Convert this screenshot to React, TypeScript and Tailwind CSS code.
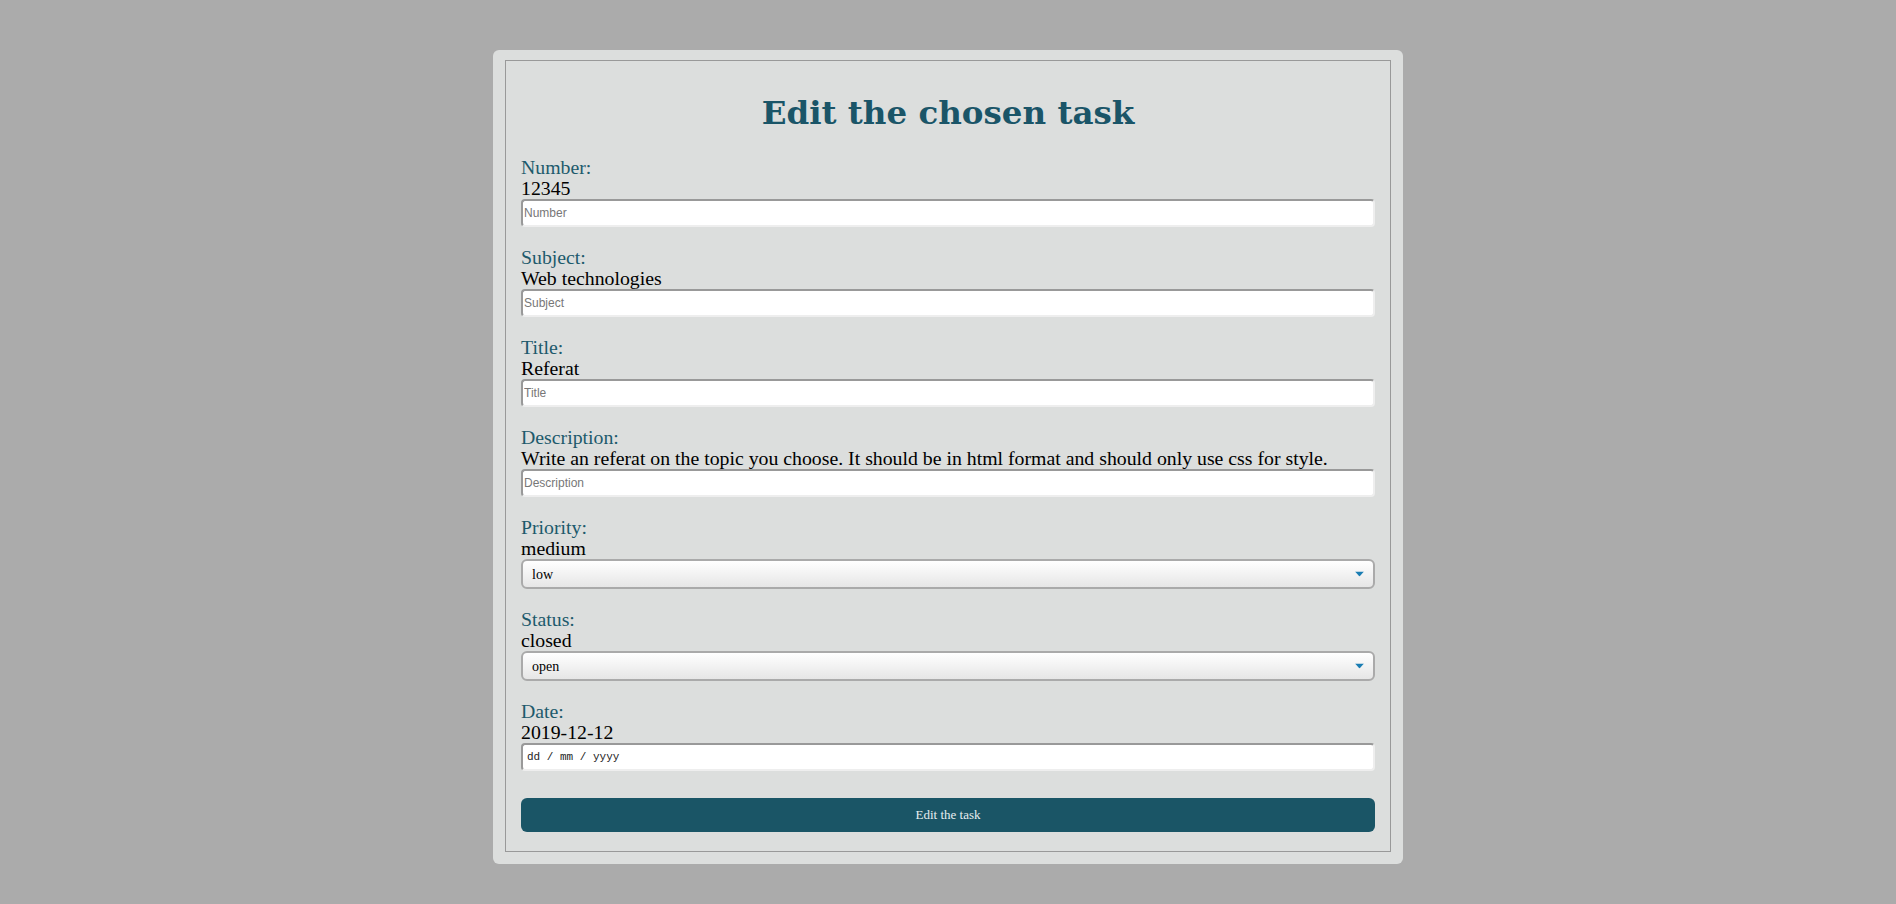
const FIELDS = [
  { label: 'Number:', value: '12345', placeholder: 'Number' },
  { label: 'Subject:', value: 'Web technologies', placeholder: 'Subject' },
  { label: 'Title:', value: 'Referat', placeholder: 'Title' },
  {
    label: 'Description:',
    value: 'Write an referat on the topic you choose. It should be in html format and should only use css for style.',
    placeholder: 'Description',
  },
];

const SELECTS = [
  { label: 'Priority:', value: 'medium', options: ['low', 'medium', 'high'] },
  { label: 'Status:', value: 'closed', options: ['open', 'closed'] },
];

const serif = "font-['Liberation_Serif',Georgia,serif]";

function Arrow() {
  return (
    <svg width="9" height="5" viewBox="0 0 9 5" className="absolute right-[11px] top-1/2 -translate-y-1/2 pointer-events-none">
      <polygon points="0,0 9,0 4.5,5" fill="#1a7db3" />
    </svg>
  );
}

export default function App() {
  return (
    <div className="min-h-[904px] bg-[#ababab] pt-[50px]">
      <div className="w-[910px] mx-auto bg-[#dcdedd] rounded-md px-3 pt-[10px] pb-3">
        <form className={`border border-[#999] px-[15px] pt-[28px] pb-[19px] ${serif}`} onSubmit={e => e.preventDefault()}>
          <h1 className="text-center text-[32.5px] leading-[48px] font-bold text-[#1a5568] mb-5 font-['DejaVu_Serif',Georgia,serif]">Edit the chosen task</h1>

          {FIELDS.map(f => (
            <div key={f.label} className="mb-5">
              <div className="text-[19.8px] leading-[21px] text-[#1d5a6c]">{f.label}</div>
              <div className="text-[19.8px] leading-[21px] text-black">{f.value}</div>
              <input
                type="text"
                placeholder={f.placeholder}
                className="block w-full h-[28px] bg-white rounded-[4px] border-2 border-t-[#999] border-l-[#999] border-r-[#eee] border-b-[#eee] px-[1px] text-[12px] font-['Liberation_Sans',Tahoma,sans-serif] placeholder-[#777] outline-none"
              />
            </div>
          ))}

          {SELECTS.map(s => (
            <div key={s.label} className="mb-5">
              <div className="text-[19.8px] leading-[21px] text-[#1d5a6c]">{s.label}</div>
              <div className="text-[19.8px] leading-[21px] text-black">{s.value}</div>
              <div className="relative">
                <select
                  defaultValue={s.options[0]}
                  className="block w-full h-[30px] appearance-none rounded-[6px] border-2 border-[#aaa] bg-gradient-to-b from-white to-[#e6e6e6] pl-[9px] text-[14px] text-black outline-none"
                >
                  {s.options.map(o => <option key={o}>{o}</option>)}
                </select>
                <Arrow />
              </div>
            </div>
          ))}

          <div className="mb-[27px]">
            <div className="text-[19.8px] leading-[21px] text-[#1d5a6c]">Date:</div>
            <div className="text-[19.8px] leading-[21px] text-black">2019-12-12</div>
            <div className="h-[28px] bg-white rounded-[4px] border-2 border-t-[#999] border-l-[#999] border-r-[#eee] border-b-[#eee] px-[4px] flex items-center text-[11px] text-[#222] font-['Liberation_Mono',monospace]">
              dd / mm / yyyy
            </div>
          </div>

          <button type="submit" className="block w-full h-[34px] rounded-[6px] bg-[#1a5566] text-[13px] text-[#e6eef0]">
            Edit the task
          </button>
        </form>
      </div>
    </div>
  );
}
